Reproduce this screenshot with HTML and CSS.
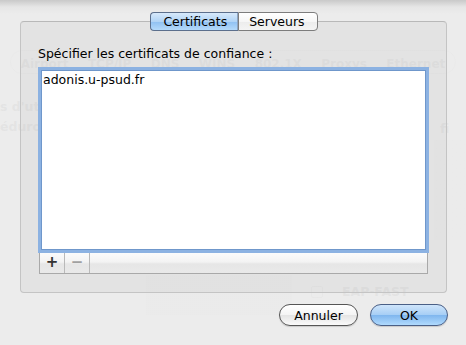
FILE: index.html
```html
<!DOCTYPE html>
<html lang="fr">
<head>
  <meta charset="UTF-8" />
  <title>Certificats</title>
  <link rel="stylesheet" href="styles.css">
</head>
<body>

  <!-- fenêtre derrière la feuille -->
  <div class="fenetre">
    <div class="onglets-fond">
      <span>Airport</span><span>TCP/IP</span><span>DNS</span><span>WINS</span><span>802.1X</span><span>Proxys</span><span>Ethernet</span>
    </div>
    <div class="texte-fond t1">s d'utilisateur</div>
    <div class="texte-fond t2">édurop</div>
    <div class="texte-fond t4">fi</div>
    <div class="case-fond c1"></div>
    <div class="case-fond c2"></div>
    <div class="texte-fond t3">EAP-FAST</div>
    <div class="boite-fond"></div>
    <div class="bande-fond"></div>
  </div>

  <!-- feuille -->
  <div class="feuille">
    <div class="segments">
      <span class="seg actif">Certificats</span>
      <span class="seg">Serveurs</span>
    </div>

    <div class="groupe">
      <p class="legende">Spécifier les certificats de confiance :</p>
      <div class="liste">
        <div class="item">adonis.u-psud.fr</div>
      </div>
      <div class="barre">
        <span class="mini plus">+</span>
        <span class="mini moins">−</span>
      </div>
    </div>

    <div class="actions">
      <button class="bouton">Annuler</button>
      <button class="bouton ok">OK</button>
    </div>
  </div>

</body>
</html>
```

FILE: styles.css
```css
* {
  box-sizing: border-box;
  margin: 0;
  padding: 0;
}

body {
  width: 466px;
  height: 345px;
  overflow: hidden;
  position: relative;
  background-color: #ececec;
  font-family: "DejaVu Sans", sans-serif;
  font-size: 12.5px;
  color: #000;
}

/* FENÊTRE DERRIÈRE */
.fenetre {
  position: absolute;
  inset: 0;
}

.onglets-fond {
  position: absolute;
  left: 10px;
  top: 50px;
  width: 446px;
  height: 24px;
  border: 1px solid #b0b0b0;
  border-radius: 12px;
  display: flex;
  justify-content: space-around;
  align-items: center;
  padding-top: 4px;
  color: #444;
  font-weight: bold;
  font-size: 12px;
}

.texte-fond {
  position: absolute;
  color: #222;
  font-weight: bold;
  white-space: nowrap;
}

.t1 { left: 0; top: 99px; }
.t2 { left: 0; top: 119px; }
.t3 { left: 342px; top: 284px; }
.t4 { left: 440px; top: 121px; }

.case-fond {
  position: absolute;
  width: 12px;
  height: 12px;
  border: 1px solid #888;
  border-radius: 2px;
}

.c1 { left: 311px; top: 262px; }
.c2 { left: 311px; top: 286px; }

.boite-fond {
  position: absolute;
  left: 146px;
  top: 275px;
  width: 146px;
  height: 40px;
  background-color: #cfcfcf;
}

.bande-fond {
  position: absolute;
  left: 434px;
  top: 140px;
  width: 40px;
  height: 100px;
  background-color: #d4d4d4;
}

/* FEUILLE */
.feuille {
  position: absolute;
  inset: 0;
  padding: 12px 19px 0 20px;
  background: linear-gradient(#c9c9c9 0px, #e6e6e6 7px, rgba(236, 236, 236, 0.955) 14px);
}

.segments {
  display: flex;
  justify-content: center;
  margin-left: 1px;
  margin-bottom: -10px;
  position: relative;
  z-index: 1;
}

.seg {
  height: 19px;
  line-height: 17px;
  padding: 0 10px;
  border: 1px solid #7d7d7d;
  background: linear-gradient(#ffffff, #f6f6f6 50%, #ececec 51%, #f4f4f4);
}

.seg:first-child {
  border-radius: 4px 0 0 4px;
  border-right: none;
  padding: 0 11px 0 12px;
}

.seg:last-child {
  border-radius: 0 4px 4px 0;
  padding: 0 12px 0 10px;
}

.seg.actif {
  border-color: #5c6f8c;
  background: linear-gradient(#d7e9fb, #b1d4f6 50%, #8fc0f2 51%, #b4dafb);
  box-shadow: inset -1px 0 0 #8ca4c4;
}

.groupe {
  width: 427px;
  height: 272px;
  border: 1px solid #c4c4c4;
  border-top-color: #b8b8b8;
  border-radius: 4px;
  background-color: rgba(0, 0, 0, 0.035);
  padding: 24px 17px 0 17px;
}

.legende {
  height: 16px;
  line-height: 16px;
  margin-bottom: 5px;
}

.liste {
  width: 391px;
  height: 186px;
  background: #fff;
  border: 3px solid #8cb2e2;
  box-shadow: inset 0 0 0 1px #6f97cb;
  padding: 2px 2px;
}

.item {
  line-height: 16px;
}

.barre {
  display: flex;
  width: 389px;
  height: 21px;
  margin-left: 1px;
  border: 1px solid #a9a9a9;
  border-top: none;
  background: linear-gradient(#fbfbfb, #f3f3f3 45%, #e6e6e6 55%, #e9e9e9);
}

.mini {
  width: 25px;
  border-right: 1px solid #b9b9b9;
  text-align: center;
  font-size: 15px;
  line-height: 19px;
  font-weight: bold;
}

.plus { color: #333; }
.moins { color: #a0a0a0; }

.actions {
  display: flex;
  justify-content: flex-end;
  gap: 12px;
  margin-top: 11px;
  margin-right: -1px;
}

.bouton {
  height: 22px;
  width: 79px;
  border: 1px solid #555;
  border-radius: 11px;
  font-family: "DejaVu Sans", sans-serif;
  font-size: 12.5px;
  color: #000;
  background: linear-gradient(#ffffff, #f4f4f4 50%, #e4e4e4 51%, #fafafa);
  box-shadow: 0 1px 1px rgba(0, 0, 0, 0.15);
}

.bouton.ok {
  width: 78px;
  border-color: #4a5f86;
  background: linear-gradient(#cfe5fb, #a6cef5 50%, #7fb6ee 51%, #b0dafd);
}
```
